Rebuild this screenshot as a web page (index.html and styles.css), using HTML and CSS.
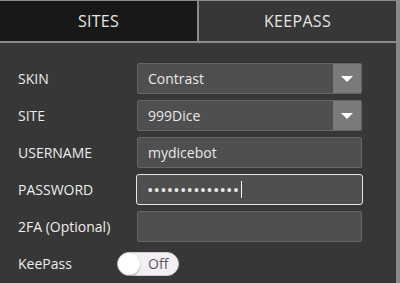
FILE: index.html
```html
<!DOCTYPE html>
<html lang="en">
<head>
  <meta charset="UTF-8" />
  <title>Login</title>
  <link rel="stylesheet" href="styles.css">
</head>
<body>
  <div class="panel">
    <div class="tabs">
      <div class="tab active">SITES</div>
      <div class="tab">KEEPASS</div>
    </div>

    <div class="form">
      <div class="row">
        <label>SKIN</label>
        <div class="select">
          <span class="value">Contrast</span>
          <span class="arrow"></span>
        </div>
      </div>
      <div class="row">
        <label>SITE</label>
        <div class="select">
          <span class="value">999Dice</span>
          <span class="arrow"></span>
        </div>
      </div>
      <div class="row">
        <label>USERNAME</label>
        <div class="field">mydicebot</div>
      </div>
      <div class="row">
        <label>PASSWORD</label>
        <div class="field focused"><span class="dots">••••••••••••••</span><span class="caret"></span></div>
      </div>
      <div class="row">
        <label>2FA (Optional)</label>
        <div class="field"></div>
      </div>
      <div class="row toggle-row">
        <label>KeePass</label>
        <div class="toggle">
          <span class="knob"></span>
          <span class="toggle-text">Off</span>
        </div>
      </div>
    </div>
  </div>
</body>
</html>
```

FILE: styles.css
```css
body {
  margin: 0;
  font-family: "Open Sans", sans-serif;
  background-color: #373737;
  color: #ececec;
}

.panel {
  width: 396px;
  height: 282px;
  border-top: 1px solid #8a8a8a;
  border-right: 4px solid #8a8a8a;
  background-color: #373737;
  overflow: hidden;
}

.tabs {
  display: flex;
  height: 40px;
  border-bottom: 2px solid #8a8a8a;
}

.tab {
  flex: 1;
  display: flex;
  align-items: center;
  justify-content: center;
  font-size: 16px;
  letter-spacing: 0.3px;
  color: #e6e6e6;
  background-color: #373737;
}

.tab.active {
  background-color: #181818;
  border-right: 2px solid #8a8a8a;
}

.form {
  padding: 20px 34px 0 18px;
  display: flex;
  flex-direction: column;
  gap: 6px;
}

.row {
  display: flex;
  align-items: center;
  height: 31px;
}

.row label {
  width: 119px;
  font-size: 14px;
  color: #ededed;
}

.select,
.field {
  flex: 1;
  height: 29px;
  display: flex;
  align-items: center;
  background-color: #4f4f4f;
  border: 1px solid #666;
  border-radius: 2px;
  font-size: 14px;
  color: #e8e8e8;
}

.select .value {
  flex: 1;
  padding-left: 10px;
}

.select .arrow {
  width: 28px;
  height: 29px;
  background-color: #7a7a7a;
  position: relative;
}

.select .arrow::after {
  content: "";
  position: absolute;
  left: 8px;
  top: 12px;
  border-left: 6px solid transparent;
  border-right: 6px solid transparent;
  border-top: 6px solid #fff;
}

.field {
  padding-left: 10px;
}

.field.focused {
  border: 1px solid #e6e6e6;
  margin: 0 -1px;
  border-radius: 3px;
}

.dots {
  font-size: 17px;
  letter-spacing: 0.2px;
}

.caret {
  display: inline-block;
  width: 1px;
  height: 17px;
  background-color: #fff;
  margin-left: 2px;
}

.toggle-row label {
  width: 99px;
}

.toggle {
  width: 60px;
  height: 22px;
  border: 1px solid #d0c8d0;
  border-radius: 12px;
  background-color: #f4eff4;
  display: flex;
  align-items: center;
}

.knob {
  width: 22px;
  height: 22px;
  border-radius: 50%;
  background-color: #fff;
  box-shadow: 0 1px 2px rgba(0, 0, 0, 0.35);
}

.toggle-text {
  margin-left: 8px;
  font-size: 14px;
  color: #5a5a5a;
}
```
